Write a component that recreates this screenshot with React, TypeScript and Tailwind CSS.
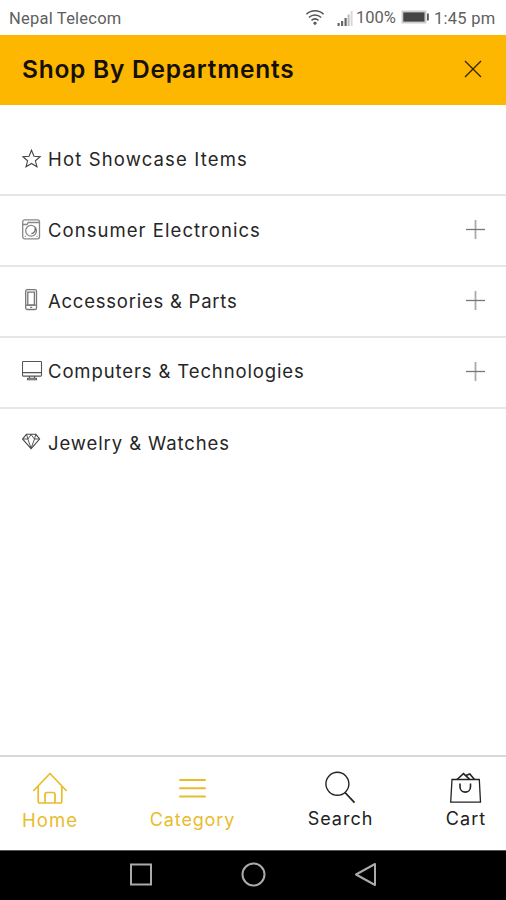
import type { ReactNode } from 'react';

const StarIcon = () => (
  <svg width="20" height="22" viewBox="0 0 20 22" fill="none" stroke="#444" strokeWidth="1.1">
    <path d="M9.5 2.2 12 8.2l6.2.5-4.8 4.1 1.6 6L9.5 15.5 4 18.8l1.6-6L.9 8.7l6.2-.5Z" />
  </svg>
);

const WasherIcon = () => (
  <svg width="20" height="22" viewBox="0 0 20 22" fill="none" stroke="#888" strokeWidth="1.3">
    <rect x="0.7" y="0.8" width="16.8" height="19" rx="2" />
    <path d="M1 5.5h4l1.2-2h11.3" />
    <circle cx="9.1" cy="11.8" r="5.4" />
    <path d="M13 8.8c1 2.4-.6 5.4-3.6 5.9" stroke="#666" />
    <path d="M2.8 17.4h1M14.5 17.4h1" />
  </svg>
);

const PhoneIcon = () => (
  <svg width="20" height="22" viewBox="0 0 20 22" fill="none" stroke="#777" strokeWidth="1.3">
    <rect x="3.7" y="0.7" width="10.8" height="19.8" rx="1.6" />
    <rect x="5.8" y="3.1" width="6.6" height="13" />
    <path d="M3.9 16.1h10.4M8.2 18.3h2" />
  </svg>
);

const MonitorIcon = () => (
  <svg width="21" height="22" viewBox="0 0 21 22" fill="none" stroke="#555" strokeWidth="1.1">
    <rect x="0.5" y="1.5" width="19" height="14.6" rx="0.8" />
    <path d="M.5 12.6h19M7.5 16.1v2.2M12.5 16.1v2.2M5.6 18.2v1.6h8.8v-1.6Z" />
  </svg>
);

const DiamondIcon = () => (
  <svg width="20" height="22" viewBox="0 0 20 22" fill="none" stroke="#444" strokeWidth="1.1">
    <path d="M4.5 2.3h9.4L17.6 7l-8.5 9.6L.6 7Z" />
    <path d="M1 7h4.8l3.3 9.2L12.5 7h4.8M4.7 2.5 5.8 7l3.3-4.3L12.5 7l1.3-4.5" strokeWidth="0.9" />
  </svg>
);

const PlusIcon = () => (
  <svg width="19" height="19" viewBox="0 0 19 19" fill="none">
    <path d="M9.5 0v19" stroke="#aaa" strokeWidth="1.8" />
    <path d="M0 9.5h19" stroke="#777" strokeWidth="1.3" />
  </svg>
);

const StatusBar = () => (
  <div className="flex h-[34.5px] items-center pt-[2px] text-[#606060]">
    <span className="ml-[9px] w-[296px] translate-y-px font-['Roboto',sans-serif] text-[16.5px] tracking-[0.22px]">Nepal Telecom</span>
    <svg className="shrink-0" width="20" height="18" viewBox="0 0 20 18" fill="none" stroke="#555" strokeWidth="1.5">
      <path d="M1.4 5.3c5-4.6 12.2-4.6 17.2 0M3.8 8.5c3.7-3.3 8.7-3.3 12.4 0M6.5 11.3c2.2-1.8 4.8-1.8 7 0" />
      <path d="m8 14 2-1.4 2 1.4-2 2.2Z" fill="#555" stroke="none" />
    </svg>
    <svg className="ml-[12px] shrink-0" width="17" height="17" viewBox="0 0 17 17">
      <path d="M.5 13h2.2v3H.5zM4 11h2.2v5H4zM7.5 8h2.2v8H7.5z" fill="#666" />
      <path d="M10.6 4.5h2V16h-2z" fill="#bbb" />
      <path d="M13.6 1h2v15h-2z" fill="#d8d8d8" />
    </svg>
    <span className="ml-[2px] w-[43px] whitespace-nowrap font-['Roboto',sans-serif] text-[16.5px]">100%</span>
    <svg className="ml-[2px] shrink-0 -translate-y-px" width="28" height="14" viewBox="0 0 28 14">
      <path d="M.5.5h25v13H.5z" fill="#ccc" />
      <path d="M2.3 2.4h21.2v9.2H2.3z" fill="#444" />
      <path d="M26 3.5h1.8v7H26z" fill="#555" />
    </svg>
    <span className="ml-[5px] translate-y-px whitespace-nowrap font-['Roboto',sans-serif] text-[16.5px] tracking-[0.25px]">1:45 pm</span>
  </div>
);

type RowProps = { icon: ReactNode; label: string; textClass: string; expandable?: boolean; last?: boolean };

const Row = ({ icon, label, textClass, expandable, last }: RowProps) => (
  <li className={`flex h-[70.75px] items-center pl-[22px] pr-[21px] ${last ? '' : 'border-b-2 border-[#e6e6e6]'}`}>
    <span className="flex w-[26px] shrink-0 -translate-y-px">{icon}</span>
    <span className={`whitespace-nowrap text-[18.5px] text-[#262626] ${textClass}`}>{label}</span>
    {expandable && <span className="ml-auto -translate-y-px"><PlusIcon /></span>}
  </li>
);

export default function App() {
  return (
    <div className="flex h-[900px] w-[506px] flex-col overflow-hidden bg-white font-['Inter','Noto_Sans',sans-serif]">
      <StatusBar />
      <header className="flex h-[70px] shrink-0 items-center justify-between bg-[#fdb700] pl-[22px] pr-[24px]">
        <h1 className="whitespace-nowrap text-[24.5px] font-semibold tracking-[0.75px] text-[#141005]">Shop By Departments</h1>
        <svg className="-translate-y-px" width="18" height="18" viewBox="0 0 18 18" stroke="#332600" strokeWidth="1.3">
          <path d="m1 1 16 16M17 1 1 17" />
        </svg>
      </header>
      <ul className="flex-1 pt-[21px]">
        <Row icon={<StarIcon />} label="Hot Showcase Items" textClass="tracking-[1.15px]" />
        <Row icon={<WasherIcon />} label="Consumer Electronics" textClass="tracking-[1.05px]" expandable />
        <Row icon={<PhoneIcon />} label="Accessories & Parts" textClass="tracking-[0.76px]" expandable />
        <Row icon={<MonitorIcon />} label="Computers & Technologies" textClass="tracking-[0.88px]" expandable />
        <Row icon={<DiamondIcon />} label="Jewelry & Watches" textClass="tracking-[0.9px]" last />
      </ul>
      <nav className="flex h-[95px] shrink-0 items-start justify-between border-t-2 border-[#d8d8d8] pl-[22px] pr-[20px] pt-[14px] text-[18px] leading-[24px] text-[#222]">
        <a className="flex w-[56px] flex-col items-center text-[#eabb2c]">
          <svg width="36" height="37" viewBox="0 0 36 37" fill="none" stroke="currentColor" strokeWidth="1.7" strokeLinecap="round" strokeLinejoin="round">
            <path d="M1.8 19.5 18 2.5l16.2 17M6.2 15.5v14.8q0 1.7 1.7 1.7h20.2q1.7 0 1.7-1.7V15.5M13 32v-8.5q0-2 2-2h6q2 0 2 2V32" />
          </svg>
          <span className="whitespace-nowrap text-[18.5px] tracking-[1.1px]">Home</span>
        </a>
        <a className="flex w-[85px] flex-col items-center text-[#eabb2c]">
          <svg width="36" height="37" viewBox="0 0 36 37" stroke="currentColor" strokeWidth="2" strokeLinecap="round">
            <path d="M5 9h25M5 17.3h25M5 25.5h25" />
          </svg>
          <span className="whitespace-nowrap tracking-[0.85px]">Category</span>
        </a>
        <a className="flex w-[67px] flex-col items-center">
          <svg width="36" height="36" viewBox="0 0 36 36" fill="none" stroke="currentColor" strokeWidth="1.4">
            <circle cx="14.4" cy="12.8" r="11.5" />
            <path d="m22 21.5 9.5 10.2" strokeWidth="1.8" />
          </svg>
          <span className="whitespace-nowrap tracking-[1px]">Search</span>
        </a>
        <a className="flex w-[40px] flex-col items-center">
          <svg width="36" height="36" viewBox="0 0 36 36" fill="none" stroke="currentColor" strokeWidth="1.3">
            <path d="M4 8.5h27.3l1.2 22.6H2.7Z" />
            <path d="m9 8.5 6.5-5.9 6 5.6M17.8 4.5l4-1.5 4.7 5.5M12 12.5v3.2c0 7.2 10.5 7.2 10.5 0v-3.2" strokeWidth="1.6" />
          </svg>
          <span className="whitespace-nowrap tracking-[1.1px]">Cart</span>
        </a>
      </nav>
      <footer className="flex h-[50px] shrink-0 items-center justify-center border-t border-[#555] bg-black pb-[1px]">
        <svg width="250" height="26" viewBox="0 0 250 26" fill="none" stroke="#aaa" strokeWidth="2">
          <rect x="3" y="2.5" width="20" height="20" />
          <circle cx="125.5" cy="12.5" r="11" />
          <path d="M247 2v21L228 12.5Z" strokeLinejoin="round" />
        </svg>
      </footer>
    </div>
  );
}
